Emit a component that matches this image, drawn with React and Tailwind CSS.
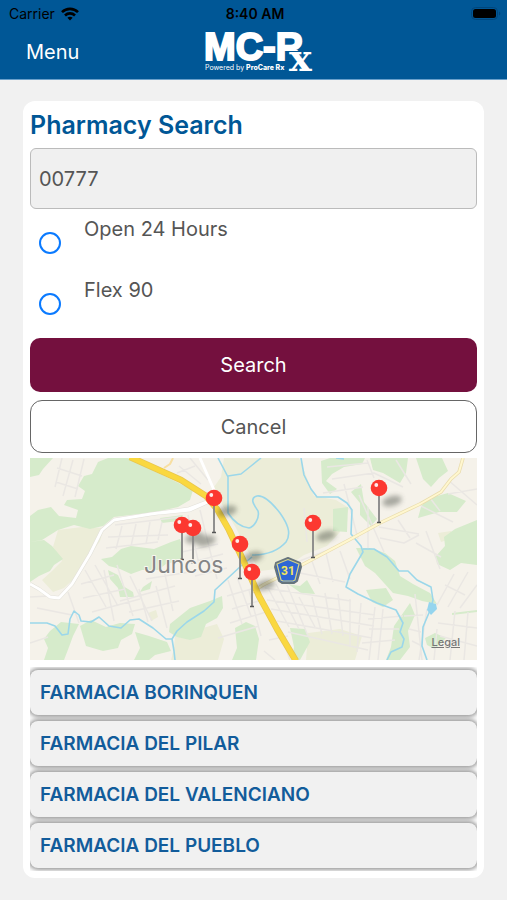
import { useState } from 'react';

const pharmacies = [
  'FARMACIA BORINQUEN',
  'FARMACIA DEL PILAR',
  'FARMACIA DEL VALENCIANO',
  'FARMACIA DEL PUEBLO',
];

const pins = [
  { x: 184, y: 40 },
  { x: 152, y: 67 },
  { x: 163, y: 70 },
  { x: 210, y: 86 },
  { x: 222, y: 114 },
  { x: 283, y: 65 },
  { x: 349, y: 30 },
];

const woods = [
  'M0 0H23L13 11 9 17 0 19Z',
  'M68 4 78 0H98L128 15 163 32 160 42 148 49 126 54 84 59 73 68 60 71 44 67 28 72 12 82 0 84V58L8 52 21 49 29 58 46 60 48 52 34 47 37 42 52 41 55 33 48 28 54 18 62 16Z',
  'M0 84 14 82 22 88 33 101 24 107 20 113 9 118 0 124Z',
  'M71 101 82 99 91 91 101 88 124 91 141 84 150 81 153 91 152 102 136 106 128 112 112 112 101 116 90 111 79 108Z',
  'M78 112 88 117 93 128 103 134 104 139 90 139 88 130 80 121Z',
  'M113 129 122 123 120 131 110 134Z',
  'M180 143 192 138 193 150 187 160 176 166 171 179 160 182 147 179 139 174 140 166 150 158 160 150Z',
  'M20 173 31 164 49 166 43 178 39 189 34 202H14L18 190 14 181Z',
  'M50 168 61 162 76 169 90 165 105 166 102 176 91 182 88 190 73 193 56 188Z',
  'M105 174 119 178 137 184 141 193 125 197 119 202H104L110 190Z',
  'M205 170 216 164 225 168 229 181 226 202H202L207 190Z',
  'M291 3 300 0H335L332 6 314 9 302 16 296 23 307 31 300 36 292 25Z',
  'M340 0H378L376 15 370 25 353 15 343 12Z',
  'M386 0H412L418 13 409 20 401 29 393 21Z',
  'M303 51 318 49 317 74 303 73Z',
  'M321 34 331 26 334 44 347 61 341 68 330 57 330 45Z',
  'M396 41 418 35 436 43 427 54 409 54 388 60 391 49Z',
  'M447 62V107L431 105 420 112 407 106 406 98 415 88 414 79 425 71Z',
  'M326 90 340 90 355 95 365 103 370 118 383 126 400 135 407 146 392 143 378 138 363 135 345 115 335 108Z',
  'M336 132 356 130 363 142 353 149 342 144Z',
  'M364 168 380 145 385 157 378 173 380 189 370 202H356L361 189Z',
  'M270 128 277 122 285 136 271 135 258 126Z',
  'M260 170 275 171 280 184 270 202H262L264 189Z',
  'M395 180 405 175 416 180 405 191 397 187Z',
  'M422 155 447 152V154L422 157Z',
  'M130 60 153 57 149 63 132 65Z',
];

const fields = [
  'M28 72 52 69 74 70 70 83 59 99 48 117 34 130 23 134 12 122 22 113 32 103 23 89Z',
  'M194 0H269L275 15 284 38 306 42 319 50 310 74 297 88 274 97 255 110 230 113 216 90 206 70 193 48 184 29 191 19Z',
  'M145 178 187 166 194 181 188 202H141L144 190Z',
  'M278 175 310 171 332 178 325 202H276Z',
  'M408 75 421 73 424 80 411 84Z',
  'M118 155 126 152 128 159 121 163Z',
  'M0 68 11 64 16 73 3 75Z',
];

const streets = [
  'M32 0 25 29M43 2 33 38M54 1 45 39M27 10 52 18M26 24 48 31',
  'M85 67 150 59M78 79 138 77M76 90 128 84M92 68 86 91M106 66 101 88M120 64 116 86M132 64 128 82',
  'M55 112 76 149M65 107 88 148M51 126 84 117M53 140 95 131M62 154 110 141M74 112 84 163M87 107 103 158M100 118 122 163',
  'M90 143 145 128M99 154 149 143M109 131 118 164M126 128 137 170M116 121 166 113M134 112 143 153',
  'M158 57 170 111M170 52 187 121M152 94 188 86M159 105 193 96M165 118 197 110',
  'M198 122 212 166M207 119 221 158M219 132 231 178M197 138 225 130M202 151 232 142M200 165 236 154M188 180 229 168',
  'M238 130 259 169M246 126 269 171M257 127 278 178M269 139 285 169M282 139 292 176M295 135 302 176M308 136 313 178M320 141 320 189M331 145 327 194',
  'M237 142 345 157M241 151 344 168M247 163 342 180M258 174 338 192M235 130 321 143',
  'M259 107 301 91M270 115 315 124M282 103 290 126M296 95 303 124M310 93 320 121',
  'M338 161 373 158M339 171 369 171M332 185 365 182M345 149 339 202M353 151 348 202',
  'M374 158 393 157M379 171 391 174M382 183 390 187M385 136 392 202M397 151 389 202M407 171 404 202',
  'M407 147 424 116M418 149 438 114M430 150 447 127M415 127 435 137',
  'M293 35 333 29M314 26 328 81M329 37 354 94M338 49 338 91M274 50 277 84',
  'M297 9 338 5M302 21 344 15 373 29M337 2 344 20M366 2 381 26M349 69 389 76M350 80 374 85 389 77M368 62 380 80',
  'M391 48 423 64M400 40 410 53M418 36 447 31M418 22 447 47M396 73 410 111M386 85 411 99',
  'M149 8 171 26M160 0 178 22M147 15 165 8M0 139 19 138M7 150 42 157M38 134 49 165M0 185 18 179',
  'M234 193 245 202M246 164 260 202M239 182 258 178M408 165 447 170M410 178 447 188M425 153 420 202M438 154 434 202',
];

const rivers = [
  'M0 165H17L25 168 32 177 38 176 40 161 44 153 49 157 51 163 61 164 69 159 79 168 91 170 100 162 109 161 123 170 136 181 142 181 147 173 157 164 174 153 184 144 185 132 198 120 212 107 222 99',
  'M222 97C237 97 249 92 256 84 262 75 257 65 250 55 243 46 234 37 227 38 219 40 224 47 228 53 230 60 224 69 219 70 209 69 202 61 198 55V19L188 0',
  'M142 181 144 193 145 202',
  'M198 18 211 16 221 8 231 0',
  'M271 0 274 17 281 31 287 39 308 39 317 45 322 52 321 76 331 88 333 94 320 116 316 129 328 136 347 145 366 152 373 165 370 174 374 181 372 189 361 194 357 202',
  'M333 91 344 91 357 99 369 113 378 113 387 122 401 129 403 142 401 150 393 169 392 188 397 202',
  'M306 0 314 1',
];

function WifiIcon() {
  return (
    <svg width="18" height="14" viewBox="0 0 18 14" fill="none" stroke="#000" strokeWidth="2.6" aria-hidden="true">
      <path d="M1 5.2C5.5.7 12.5.7 17 5.2" />
      <path d="M4 8.5C6.8 5.7 11.2 5.7 14 8.5" />
      <path d="M9 13.5 6.4 10.7C7.9 9.4 10.1 9.4 11.6 10.7Z" fill="#000" stroke="none" />
    </svg>
  );
}

function BatteryIcon() {
  return (
    <svg width="30" height="14" viewBox="0 0 30 14" aria-hidden="true">
      <rect x=".5" y=".5" width="26" height="12" rx="4" fill="none" stroke="#00467c" />
      <rect x="2" y="2" width="23" height="9" rx="2.5" fill="#000" />
      <path d="M28 4.500c1.800.8 1.800 3.200 0 4Z" fill="#00467c" />
    </svg>
  );
}

function Logo() {
  return (
    <svg
      width="112"
      height="44"
      viewBox="0 0 112 44"
      className="overflow-visible"
      role="img"
      aria-label="MC-Rx Powered by ProCare Rx"
      fill="#fff"
    >
      <text x="0" y="30" fontSize="38" fontWeight="700" fontFamily="Liberation Sans, sans-serif" stroke="#fff" strokeWidth="2">
        MC-R
      </text>
      <text x="1" y="40" fontSize="7" fontFamily="Inter, sans-serif">
        Powered by <tspan fontWeight="800">ProCare Rx</tspan>
      </text>
      <text
        x="85"
        y="41"
        fontSize="38"
        fontWeight="700"
        fontFamily="DejaVu Serif, serif"
        stroke="#005796"
        strokeWidth="2"
        paintOrder="stroke"
      >
        x
      </text>
    </svg>
  );
}

function Pin({ x, y }) {
  return (
    <g transform={`translate(${x} ${y})`}>
      <path d="M0 6V34" stroke="#858585" strokeWidth="1.8" />
      <path d="M-2 34.5H2" stroke="#555" strokeWidth="1.5" />
      <circle r="8.3" fill="#fc3830" />
      <circle cx="-2.7" cy="-3" r="1.9" fill="#fff" opacity=".9" />
    </g>
  );
}

function PharmacyMap() {
  return (
    <div className="relative mt-[5px] overflow-hidden">
      <svg viewBox="0 0 447 202" className="block h-auto w-full" role="img" aria-label="Map of Juncos" strokeLinejoin="round">
        <defs>
          <filter id="pin-shadow" x="-50%" y="-100%" width="200%" height="300%">
            <feGaussianBlur stdDeviation="2.5" />
          </filter>
        </defs>
        <rect width="447" height="202" fill="#f5f2ea" />
        <path d={fields.join('')} fill="#ecedd8" />
        <path d={woods.join('')} fill="#d6ebcb" />
        <path d={streets.join('')} fill="none" stroke="#eae7e3" strokeWidth="1.5" />
        <path d={rivers.join('')} fill="none" stroke="#9bd7ea" strokeWidth="1.6" />
        <path d="M399 144 406 146 407 151 401 157 397 152Z" fill="#95d5ee" />

        {/* Minor roads */}
        <path d="M0 126 9 131 20 139 29 140 42 126 60 96 72 72 84 62 121 56 158 51 184 41M130 55 160 52 180 43" fill="none" stroke="#e3e1da" strokeWidth="4" />
        <path d="M0 126 9 131 20 139 29 140 42 126 60 96 72 72 84 62 121 56 158 51 184 41M130 55 160 52 180 43M170 0 184 32" fill="none" stroke="#fff" strokeWidth="2.8" />
        <path d="M222 134 233 127 253 117 283 101 319 82 350 65 390 46 411 34 421 21 429 14 433 0" fill="none" stroke="#e9dcad" strokeWidth="3.5" />
        <path d="M222 134 233 127 253 117 283 101 319 82 350 65 390 46 411 34 421 21 429 14 433 0" fill="none" stroke="#fff7cf" strokeWidth="2" />
        <path d="M134 10 140 6 143 0" fill="none" stroke="#f8dfa1" strokeWidth="2" />

        {/* Highway */}
        <path d="M100-1 151 22 176 38 187 51 199 72 214 104 229 138 247 171 266 203" fill="none" stroke="#e8c650" strokeWidth="6.5" />
        <path d="M100-1 151 22 176 38 187 51 199 72 214 104 229 138 247 171 266 203" fill="none" stroke="#fad83f" strokeWidth="5" />

        <g filter="url(#pin-shadow)" fill="#353b32" opacity=".4">
          {pins.map((pin) => (
            <ellipse
              key={`${pin.x}-${pin.y}`}
              cx={pin.x + 13}
              cy={pin.y + 13}
              rx="10"
              ry="5"
              transform={`rotate(-14 ${pin.x + 13} ${pin.y + 13})`}
            />
          ))}
        </g>
        {pins.map((pin) => (
          <Pin key={`${pin.x}-${pin.y}`} {...pin} />
        ))}

        <text x="114" y="115" fontSize="23" fontFamily="Inter, sans-serif" fill="#858585" stroke="#f8f6f0" strokeWidth="2" paintOrder="stroke">
          Juncos
        </text>

        {/* Route shield */}
        <path d="M258 100 270 105 271 109 267 123 264 125H252L249 123 245 109 246 105Z" fill="#3264c9" stroke="#66747c" strokeWidth="2" />
        <path d="M258 101.5 269 106 265 122 263 123H253L251 122 247 106Z" fill="#2e66d5" stroke="#d6d384" strokeWidth="1.2" />
        <text x="258" y="117" fontSize="12" fontWeight="700" textAnchor="middle" fontFamily="Roboto, sans-serif" fill="#f4e65b">
          31
        </text>
      </svg>
      <a href="#legal" className="absolute right-[17px] bottom-[10px] text-[11px] leading-4 font-medium text-[#777] underline">
        Legal
      </a>
    </div>
  );
}

function RadioRow({ id, label, checked, onToggle }) {
  return (
    <div className="flex h-[61px] items-start">
      <input
        id={id}
        type="radio"
        checked={checked}
        onClick={onToggle}
        readOnly
        className="mt-[23px] ml-[9px] size-[22px] shrink-0 appearance-none rounded-full border-2 border-[#0a7aff] checked:bg-[#0a7aff]"
      />
      <label htmlFor={id} className="mt-2 ml-[23px] text-xl leading-6">
        {label}
      </label>
    </div>
  );
}

export default function App() {
  const [query, setQuery] = useState('00777');
  const [open24, setOpen24] = useState(false);
  const [flex90, setFlex90] = useState(false);

  return (
    <div className="min-h-screen bg-[#f1f1f1] font-['Inter',sans-serif] text-[#555]">
      <header className="border-b border-[#69a0cb] bg-[#005796]">
        <div className="grid h-7 grid-cols-3 items-center pr-[6px] pl-[9px] text-sm leading-5 text-black">
          <div className="flex items-center gap-[6px]">
            Carrier
            <WifiIcon />
          </div>
          <div className="text-center font-semibold">8:40 AM</div>
          <div className="flex justify-end">
            <BatteryIcon />
          </div>
        </div>
        <div className="grid h-[51px] grid-cols-[1fr_auto_1fr] items-start pt-[2px]">
          <button type="button" className="justify-self-start py-[10px] pl-[26px] text-xl leading-6 text-white">
            Menu
          </button>
          <div className="pl-3">
            <Logo />
          </div>
        </div>
      </header>

      <main className="px-[23px] pt-[21px] pb-[22px]">
        <form className="rounded-xl bg-white p-[7px]" onSubmit={(e) => e.preventDefault()}>
          <h1 className="text-[25px] leading-[34px] font-semibold text-[#005796]">Pharmacy Search</h1>
          <input
            type="text"
            aria-label="Zip code"
            value={query}
            onChange={(e) => setQuery(e.target.value)}
            className="mt-[6px] block h-[61px] w-full rounded-md border border-[#bbb] bg-[#f0f0f0] px-2 text-xl"
          />
          <RadioRow id="open-24" label="Open 24 Hours" checked={open24} onToggle={() => setOpen24(!open24)} />
          <RadioRow id="flex-90" label="Flex 90" checked={flex90} onToggle={() => setFlex90(!flex90)} />
          <button type="submit" className="mt-[7px] block h-[54px] w-full rounded-[10px] bg-[#74103e] text-xl text-white">
            Search
          </button>
          <button type="button" className="mt-2 block h-[53px] w-full rounded-xl border border-[#666] bg-white text-xl">
            Cancel
          </button>

          <PharmacyMap />

          <ul className="mt-[7px] flex flex-col gap-[6px] overflow-hidden py-[3px]">
            {pharmacies.map((name) => (
              <li key={name}>
                <button
                  type="button"
                  className="block h-[45px] w-full rounded-lg bg-[#f1f1f1] px-[10px] text-left text-[19px] leading-6 font-semibold text-[#125c9b] shadow-[0_0_4px_2px_#999]"
                >
                  {name}
                </button>
              </li>
            ))}
          </ul>
        </form>
      </main>
    </div>
  );
}
